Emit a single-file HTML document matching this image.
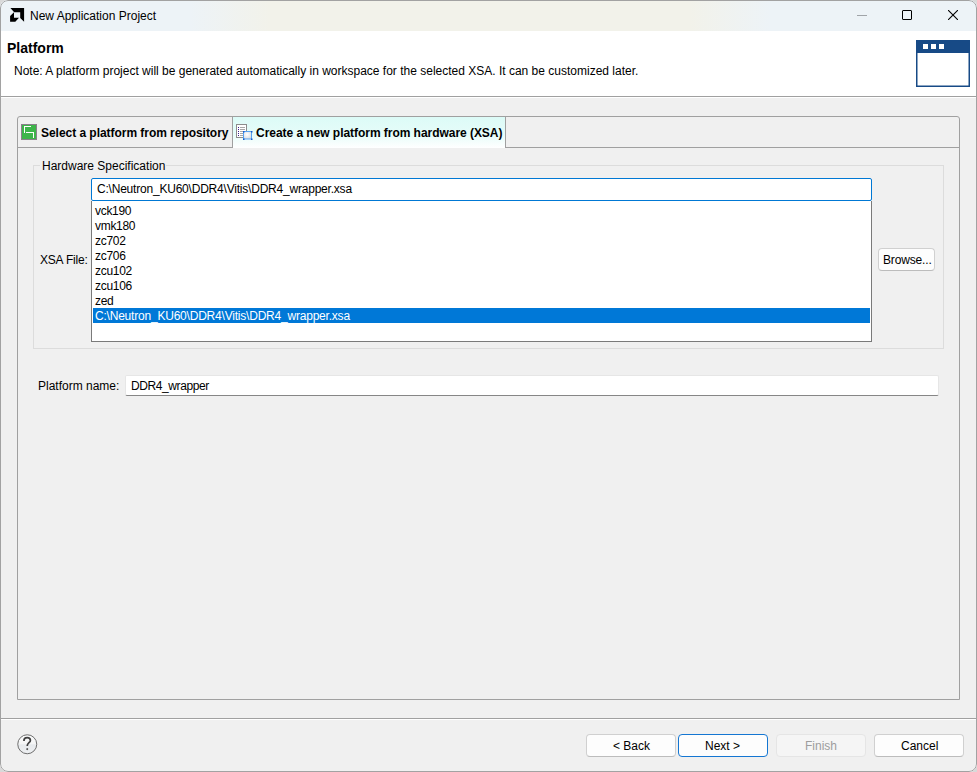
<!DOCTYPE html>
<html><head><meta charset="utf-8">
<style>
*{margin:0;padding:0;box-sizing:border-box}
html,body{width:977px;height:772px;overflow:hidden;background:#d9d9d9}
body{font-family:"Liberation Sans",sans-serif;font-size:12px;color:#000;position:relative}
.a{position:absolute}
.t{position:absolute;white-space:pre;line-height:14px;font-size:12px}
#win{position:absolute;left:0;top:0;width:977px;height:772px;border-radius:8px;background:#f0f0f0;overflow:hidden}
#frame{position:absolute;left:0;top:0;width:977px;height:772px;border:1px solid #a2a2a2;border-radius:8px}
</style></head><body>
<div id="win">
  <!-- title bar -->
  <div class="a" style="left:0;top:0;width:977px;height:31px;background:linear-gradient(90deg,#edf3f7 0px,#edf3f7 190px,#f2f2ea 270px,#f2f2ea 690px,#edf3f7 770px,#edf3f7 977px)"></div>
  <svg class="a" style="left:9px;top:7px" width="16" height="16" viewBox="9 7 16 16">
    <polygon points="10.4,8 24.1,8 24.1,21.8 20.2,17.9 20.2,12.2 14.2,12.2" fill="#000"/>
    <polygon points="10.1,16 14,12.3 14,17.8 19,17.8 15.3,21.8 10.1,21.8" fill="#000"/>
  </svg>
  <div class="t" style="left:30px;top:9px">New Application Project</div>
  <div class="a" style="left:857px;top:15px;width:10px;height:1px;background:#a0a4a8"></div>
  <div class="a" style="left:902px;top:10px;width:10px;height:10px;border:1px solid #000;border-radius:1px"></div>
  <svg class="a" style="left:948px;top:10px" width="10" height="10" viewBox="0 0 10 10"><path d="M0 0L10 10M10 0L0 10" stroke="#000" stroke-width="1.1"/></svg>

  <!-- header -->
  <div class="a" style="left:0;top:31px;width:977px;height:65px;background:#fff"></div>
  <div class="t" style="left:7px;top:40px;font-size:14px;font-weight:bold;line-height:16px">Platform</div>
  <div class="t" style="left:14px;top:64px">Note: A platform project will be generated automatically in workspace for the selected XSA. It can be customized later.</div>
  <svg class="a" style="left:916px;top:40px" width="54" height="47" viewBox="0 0 54 47">
    <rect x="0.75" y="0.75" width="52.5" height="45.5" fill="#fff" stroke="#174a86" stroke-width="1.5"/>
    <rect x="0" y="0" width="54" height="13" fill="#174a86"/>
    <rect x="7" y="4" width="5" height="5" fill="#fff"/>
    <rect x="15" y="4" width="5" height="5" fill="#fff"/>
    <rect x="23" y="4" width="5" height="5" fill="#fff"/>
  </svg>
  <div class="a" style="left:0;top:96px;width:977px;height:1px;background:#a0a0a0"></div>
  <div class="a" style="left:0;top:97px;width:977px;height:1px;background:#fff"></div>

  <!-- tab folder -->
  <div class="a" style="left:17px;top:116px;width:943px;height:584px;border:1px solid #a0a0a0;border-radius:3px 3px 0 0"></div>
  <div class="a" style="left:18px;top:147px;width:215px;height:1px;background:#a0a0a0"></div>
  <div class="a" style="left:505px;top:147px;width:454px;height:1px;background:#a0a0a0"></div>
  <div class="a" style="left:232px;top:117px;width:1px;height:31px;background:#a0a0a0"></div>
  <div class="a" style="left:505px;top:117px;width:1px;height:31px;background:#a0a0a0"></div>
  <div class="a" style="left:233px;top:117px;width:272px;height:31px;background:linear-gradient(#dcfbf7 0%,#e6fcf9 55%,#ffffff 100%)"></div>
  <!-- green icon -->
  <div class="a" style="left:21px;top:124px;width:16px;height:16px;background:#3db54a;border:1px solid #8a808a"></div>
  <svg class="a" style="left:21px;top:124px" width="16" height="16" viewBox="0 0 16 16">
    <path d="M3.5 2v7M3 2.5h7M5 8.5h8M12.5 8v6" stroke="#fff" stroke-width="1" fill="none"/>
  </svg>
  <div class="t" style="left:41px;top:126px;font-weight:bold;letter-spacing:-0.04px">Select a platform from repository</div>
  <!-- doc icon -->
  <svg class="a" style="left:236px;top:124px" width="18" height="16" viewBox="0 0 18 16">
    <rect x="0.5" y="0.5" width="10" height="13" fill="#fff" stroke="#8c8c8c"/>
    <g fill="#3a1a8a"><rect x="2" y="3" width="1" height="1"/><rect x="2" y="5" width="1" height="1"/><rect x="2" y="7" width="1" height="1"/><rect x="2" y="9" width="1" height="1"/><rect x="2" y="11" width="1" height="1"/></g>
    <g fill="#a8a8a8"><rect x="4" y="3" width="5" height="1"/><rect x="4" y="5" width="5" height="1"/><rect x="4" y="7" width="5" height="1"/><rect x="4" y="9" width="5" height="1"/><rect x="4" y="11" width="5" height="1"/></g>
    <defs><radialGradient id="bg1" cx="0.45" cy="0.4" r="0.6"><stop offset="0" stop-color="#ffffff"/><stop offset="1" stop-color="#d8dde4"/></radialGradient></defs>
    <rect x="7.5" y="7.5" width="8" height="7.5" fill="url(#bg1)" stroke="#55a2f2"/>
    <g fill="#1a5ac8"><rect x="7" y="7" width="1.5" height="1.5"/><rect x="15" y="7" width="1.5" height="1.5"/><rect x="7" y="14.5" width="1.5" height="1.5"/><rect x="15" y="14.5" width="1.5" height="1.5"/></g>
  </svg>
  <div class="t" style="left:256px;top:126px;font-weight:bold;letter-spacing:-0.04px">Create a new platform from hardware (XSA)</div>

  <!-- group -->
  <div class="a" style="left:33px;top:165px;width:911px;height:184px;border:1px solid #dcdcdc"></div>
  <div class="a" style="left:40px;top:160px;width:126px;height:10px;background:#f0f0f0"></div>
  <div class="t" style="left:42px;top:159px">Hardware Specification</div>

  <div class="t" style="left:40px;top:253px;letter-spacing:-0.2px">XSA File:</div>
  <!-- combo -->
  <div class="a" style="left:91px;top:178px;width:781px;height:23px;background:#fff;border:1px solid #0078d4;border-radius:2px"></div>
  <div class="t" style="left:97px;top:182px;letter-spacing:-0.21px">C:\Neutron_KU60\DDR4\Vitis\DDR4_wrapper.xsa</div>
  <!-- list -->
  <div class="a" style="left:91px;top:201px;width:781px;height:141px;background:#fff;border:1px solid #7a7a7a;border-top:0"></div>
  <div class="a" style="left:93px;top:308px;width:777px;height:15px;background:#0078d7"></div>
  <div class="a" style="left:95px;top:204px;line-height:15px;white-space:pre;letter-spacing:-0.3px">vck190
vmk180
zc702
zc706
zcu102
zcu106
zed
<span style="color:#fff;letter-spacing:-0.21px">C:\Neutron_KU60\DDR4\Vitis\DDR4_wrapper.xsa</span></div>
  <!-- browse -->
  <div class="a" style="left:878px;top:248px;width:57px;height:23px;background:#fdfdfd;border:1px solid #d0d0d0;border-bottom-color:#bcbcbc;border-radius:4px"></div>
  <div class="t" style="left:883px;top:253px;letter-spacing:-0.15px">Browse...</div>

  <!-- platform name -->
  <div class="t" style="left:38px;top:379px">Platform name:</div>
  <div class="a" style="left:125px;top:375px;width:814px;height:21px;background:#fff;border:1px solid #e6e6e6;border-bottom:1px solid #868686;border-radius:2px"></div>
  <div class="t" style="left:131px;top:379px;letter-spacing:-0.4px">DDR4_wrapper</div>

  <!-- separator -->
  <div class="a" style="left:0;top:718px;width:977px;height:1px;background:#a0a0a0"></div>
  <div class="a" style="left:0;top:719px;width:977px;height:1px;background:#fff"></div>
  <!-- help -->
  <svg class="a" style="left:17px;top:734px" width="21" height="21" viewBox="0 0 21 21">
    <defs><linearGradient id="hg" x1="0" y1="0" x2="0" y2="1"><stop offset="0" stop-color="#fafafa"/><stop offset="0.5" stop-color="#f4f5f6"/><stop offset="0.52" stop-color="#e6e9ec"/><stop offset="1" stop-color="#eef0f2"/></linearGradient></defs><circle cx="10.25" cy="10.25" r="9.5" fill="url(#hg)" stroke="#6e6e6e" stroke-width="1"/>
    <path d="M6.9 6.9C6.9 4.4 8.6 3.6 10.2 3.6C12 3.6 13.4 4.6 13.4 6.4C13.4 8.6 10.2 9 10.2 11.9" stroke="#404040" stroke-width="1.7" fill="none"/>
    <path d="M9 15.1L10.2 13.9L11.4 15.1L10.2 16.3Z" fill="#404040"/>
  </svg>
  <!-- buttons -->
  <div class="a" style="left:586px;top:734px;width:90px;height:23px;background:#fdfdfd;border:1px solid #d0d0d0;border-bottom-color:#bcbcbc;border-radius:4px"></div>
  <div class="t" style="left:613px;top:739px">&lt; Back</div>
  <div class="a" style="left:678px;top:734px;width:90px;height:23px;background:#fdfdfd;border:1px solid #1476d2;border-radius:4px"></div>
  <div class="t" style="left:705px;top:739px">Next &gt;</div>
  <div class="a" style="left:776px;top:734px;width:90px;height:23px;background:#f5f5f5;border:1px solid #e5e5e5;border-radius:4px"></div>
  <div class="t" style="left:805px;top:739px;color:#9d9d9d">Finish</div>
  <div class="a" style="left:874px;top:734px;width:90px;height:23px;background:#fdfdfd;border:1px solid #d0d0d0;border-bottom-color:#bcbcbc;border-radius:4px"></div>
  <div class="t" style="left:901px;top:739px">Cancel</div>
  <div id="frame"></div>
</div>
</body></html>
